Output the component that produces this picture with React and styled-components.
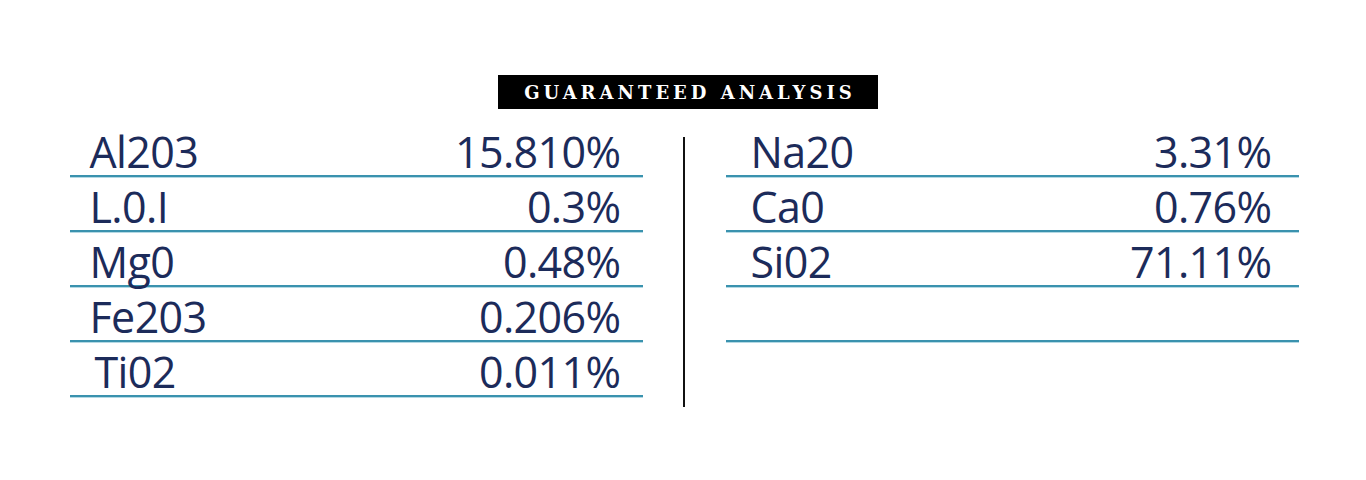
import styled, { createGlobalStyle } from "styled-components";

const leftRows = [
  { name: "Al203", value: "15.810%" },
  { name: "L.0.I", value: "0.3%" },
  { name: "Mg0", value: "0.48%" },
  { name: "Fe203", value: "0.206%" },
  { name: "Ti02", value: "0.011%", indent: true },
];

const rightRows = [
  { name: "Na20", value: "3.31%" },
  { name: "Ca0", value: "0.76%" },
  { name: "Si02", value: "71.11%" },
  { name: "", value: "" },
];

const App = () => {
  return (
    <>
      <GlobalStyle />
      <Page>
        <Badge>Guaranteed Analysis</Badge>
        <Columns>
          <Table>
            {leftRows.map((row, i) => (
              <Row key={i} inset={20}>
                <Name indent={row.indent}>{row.name}</Name>
                <span>{row.value}</span>
              </Row>
            ))}
          </Table>
          <Divider />
          <Table>
            {rightRows.map((row, i) => (
              <Row key={i} inset={25}>
                <Name>{row.name}</Name>
                <span>{row.value}</span>
              </Row>
            ))}
          </Table>
        </Columns>
      </Page>
    </>
  );
};

export default App;

const GlobalStyle = createGlobalStyle`
  body {
    margin: 0;
    background: #ffffff;
  }
`;

const Page = styled.div`
  width: 1366px;
  height: 480px;
  padding-top: 75px;
  box-sizing: border-box;
  display: flex;
  flex-direction: column;
  align-items: center;
`;

const Badge = styled.div`
  width: 380px;
  height: 34px;
  margin-left: 10px;
  padding-left: 4px;
  box-sizing: border-box;
  background: #000;
  color: #fff;
  display: flex;
  align-items: center;
  justify-content: center;
  font-family: "DejaVu Serif", "Liberation Serif", serif;
  font-weight: 700;
  font-size: 18px;
  letter-spacing: 4px;
  text-transform: uppercase;
`;

const Columns = styled.div`
  margin-top: 13px;
  margin-left: 2px;
  display: grid;
  grid-template-columns: 573px 2px 573px;
  column-gap: 40.5px;
  align-items: start;
`;

const Table = styled.div`
  display: flex;
  flex-direction: column;
`;

const Row = styled.div`
  height: 55px;
  box-sizing: border-box;
  padding: 0 ${({ inset }) => inset + 2}px 2px ${({ inset }) => inset}px;
  display: flex;
  align-items: flex-end;
  justify-content: space-between;
  border-bottom: 2px solid #3a92ae;
  box-shadow: 0 1px 0 #b4d9e4;
  font-family: "Open Sans", "Noto Sans", sans-serif;
  font-size: 43px;
  line-height: 1;
  letter-spacing: -0.6px;
  color: #1c2b5a;
`;

const Name = styled.span`
  padding-left: ${({ indent }) => (indent ? "5px" : "0")};
`;

const Divider = styled.div`
  width: 2px;
  height: 270px;
  margin-top: 15px;
  background: #111;
`;
